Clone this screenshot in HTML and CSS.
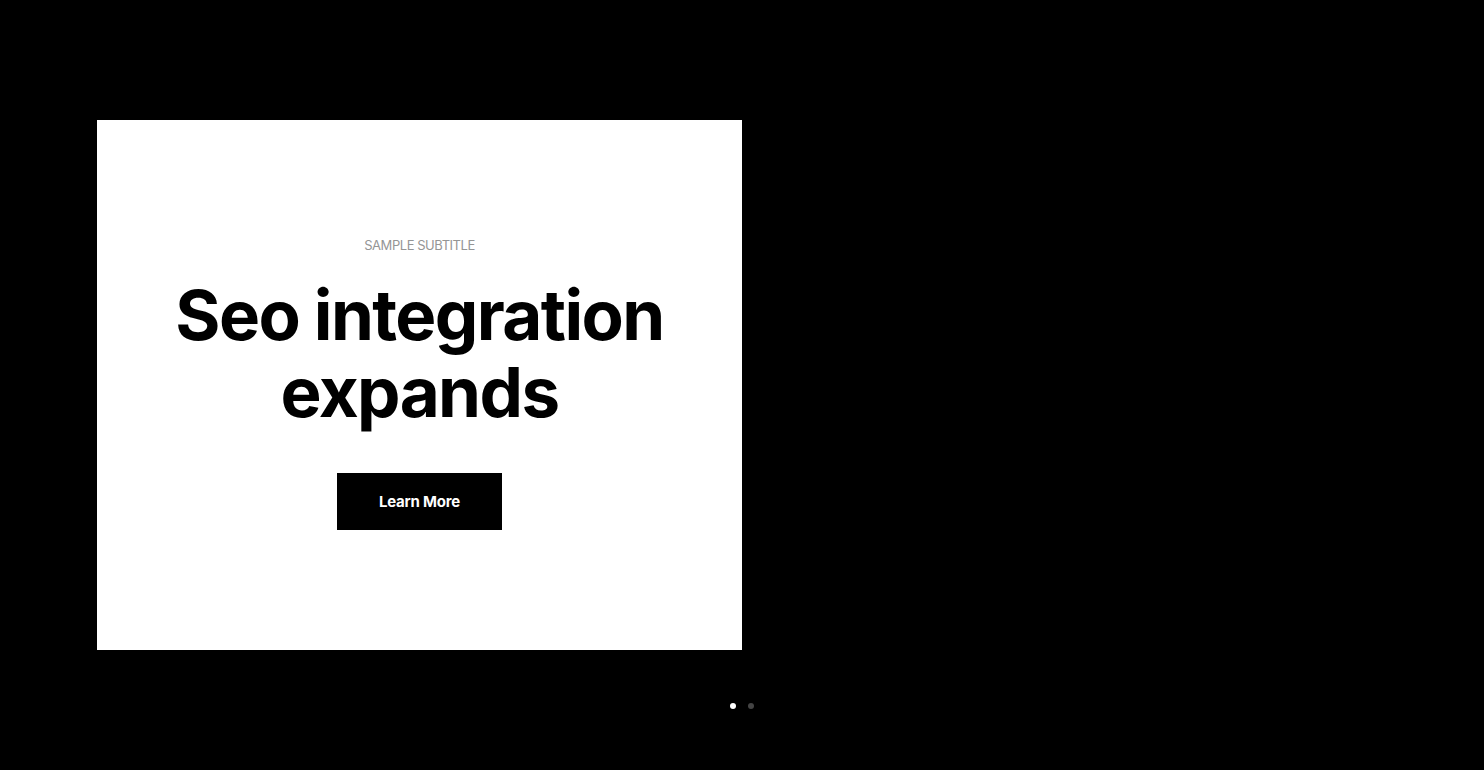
FILE: index.html
```html
<!DOCTYPE html>
<html lang="en">
<head>
<meta charset="utf-8">
<title>Slider</title>
<link rel="stylesheet" href="styles.css">
</head>
<body>
<section class="slider">
  <div class="track">
    <div class="slide">
      <p class="subtitle">SAMPLE SUBTITLE</p>
      <h1 class="title">Seo integration<br>expands</h1>
      <a class="btn" href="#">Learn More</a>
    </div>
  </div>
  <div class="dots">
    <span class="dot active"></span>
    <span class="dot"></span>
  </div>
</section>
</body>
</html>
```
FILE: styles.css
```css
* { box-sizing: border-box; }
html, body { margin: 0; padding: 0; background: #000; height: 100%; }
body { font-family: Inter, "Noto Sans", sans-serif; overflow: hidden; }
.slider { width: 1484px; height: 770px; padding-top: 120px; display: flex; flex-direction: column; }
.track { padding-left: 97px; display: flex; }
.slide {
  width: 645px; height: 530px; background: #fff;
  display: flex; flex-direction: column; align-items: center; justify-content: flex-start;
  padding-top: 117px;
  text-align: center;
}
.subtitle { margin: 0; font-size: 13px; color: #959595; letter-spacing: -0.45px; line-height: 16px; }
.title {
  margin: 24px 0 0; font-size: 69px; font-weight: 700; letter-spacing: -1.6px;
  line-height: 77px; color: #000;
}
.btn {
  margin-top: 42px; width: 165px; height: 57px; background: #000; color: #fff;
  display: flex; align-items: center; justify-content: center;
  font-size: 15px; font-weight: 700; text-decoration: none; letter-spacing: -0.2px;
}
.dots { display: flex; justify-content: center; gap: 12px; margin-top: 53px; }
.dot { width: 6px; height: 6px; border-radius: 50%; background: #444; }
.dot.active { background: #fff; }
```
